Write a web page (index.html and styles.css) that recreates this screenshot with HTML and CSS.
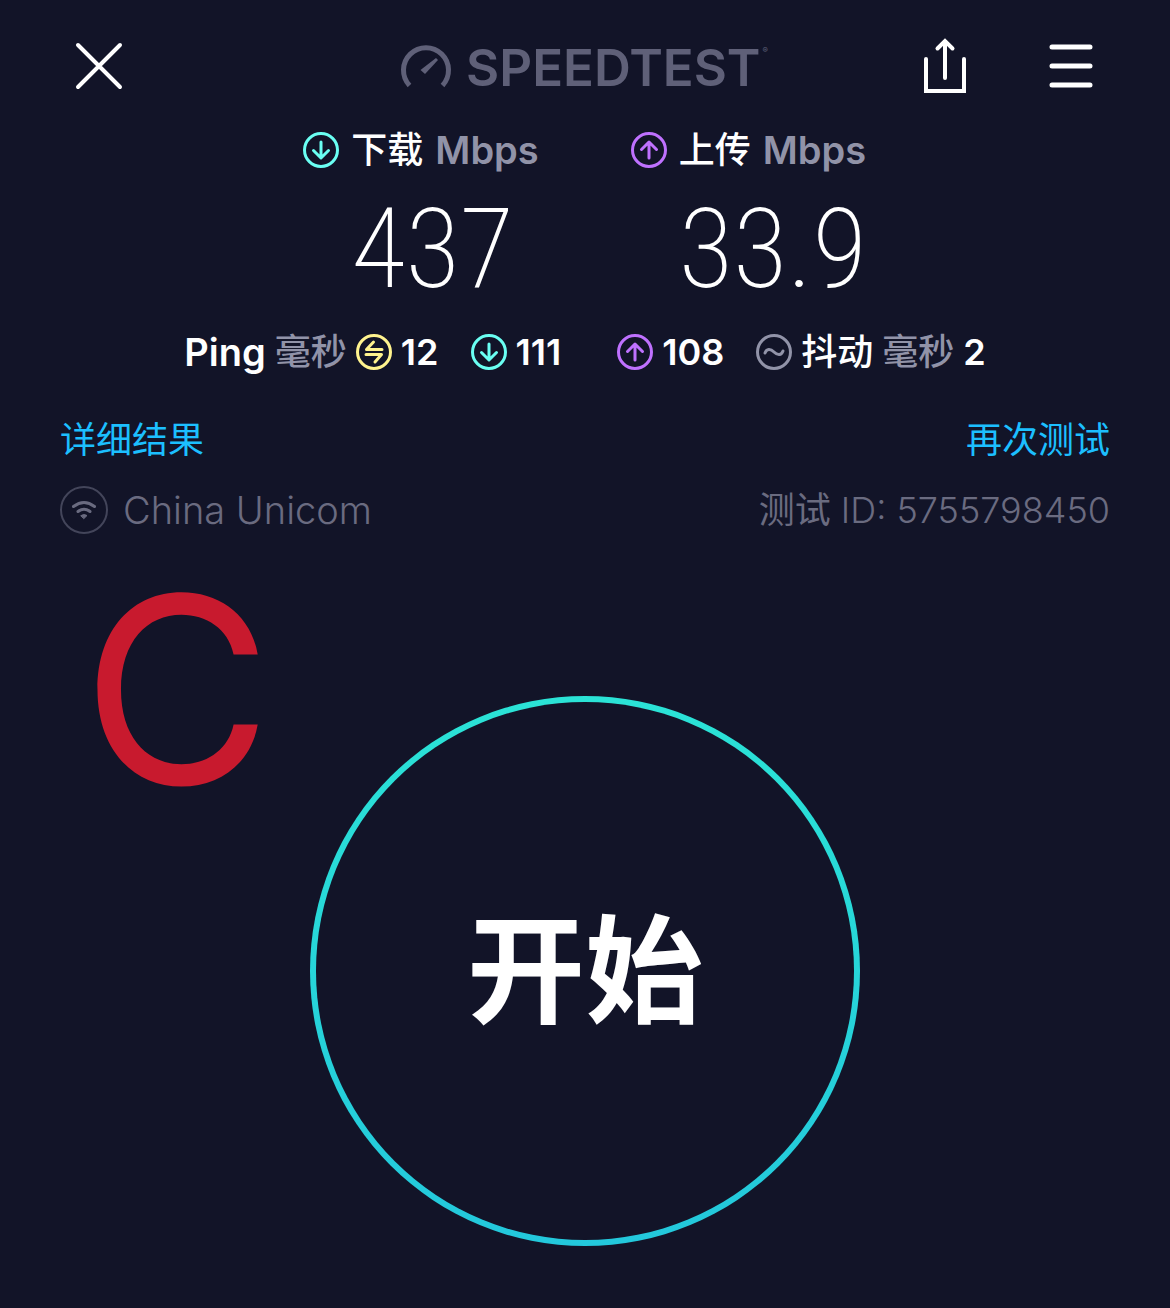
FILE: index.html
```
<!DOCTYPE html>
<html lang="zh-CN">
<head>
<meta charset="utf-8">
<title>Speedtest</title>
<meta name="viewport" content="width=device-width, initial-scale=1">
<link rel="stylesheet" href="styles.css">
</head>
<body>

<!-- shared icons -->
<svg class="sprite" aria-hidden="true">
  <symbol id="icon-down" viewBox="0 0 36 36">
    <circle cx="18" cy="18" r="16.5"/>
    <path d="M18 10v15.5M10.5 18.5l7.5 7.5l7.5-7.5"/>
  </symbol>
  <symbol id="icon-up" viewBox="0 0 36 36">
    <circle cx="18" cy="18" r="16.5"/>
    <path d="M18 26V10.5M10.5 17.5l7.5-7.5l7.5 7.5"/>
  </symbol>
  <symbol id="icon-ping" viewBox="0 0 36 36">
    <circle cx="18" cy="18" r="16.5"/>
    <path d="M26 15.5H10.5L17.5 8M10 20.5H25.5L19 28"/>
  </symbol>
  <symbol id="icon-jitter" viewBox="0 0 36 36">
    <circle cx="18" cy="18" r="16.5"/>
    <path d="M9 19c1.5-4.5 5.5-4.5 9-1s7.5 3.5 9-1"/>
  </symbol>
</svg>

<header class="topbar">
  <button class="icon-button" aria-label="关闭">
    <svg width="48" height="48" viewBox="0 0 48 48"><path d="M3 3l42 42M45 3L3 45"/></svg>
  </button>

  <div class="logo">
    <svg width="52" height="44" viewBox="0 0 52 44" aria-hidden="true">
      <path class="gauge" d="M9.500 41.500A22.500 22.500 0 1 1 42.500 41.500"/>
      <path class="needle" d="M36 14L38 16L25 30L20.500 26z"/>
    </svg>
    <span class="logo-name">SPEEDTEST</span><sup>®</sup>
  </div>

  <div class="actions">
    <button class="icon-button" aria-label="分享">
      <svg width="44" height="56" viewBox="0 0 44 56"><path d="M3 21v32h38V21M22 40V4M14.500 10.500L22 3l7.500 7.500"/></svg>
    </button>
    <button class="icon-button" aria-label="菜单">
      <svg class="bars" width="44" height="48" viewBox="0 0 44 48"><path d="M3 5h38M3 24h38M3 43h38"/></svg>
    </button>
  </div>
</header>

<main>
  <section class="speeds">
    <div class="speed">
      <h2><svg class="icon download"><use href="#icon-down"/></svg><span class="zh">下载</span> <span class="unit wide">Mbps</span></h2>
      <p class="value">437</p>
    </div>
    <div class="speed">
      <h2><svg class="icon upload"><use href="#icon-up"/></svg><span class="zh">上传</span> <span class="unit wide">Mbps</span></h2>
      <p class="value">33.9</p>
    </div>
  </section>

  <section class="latency">
    <div class="pair">
      <div class="metric"><span class="wide">Ping</span> <span class="unit zh">毫秒</span><svg class="icon ping"><use href="#icon-ping"/></svg>12</div>
      <div class="metric"><svg class="icon download"><use href="#icon-down"/></svg>111</div>
    </div>
    <div class="pair">
      <div class="metric"><svg class="icon upload"><use href="#icon-up"/></svg>108</div>
      <div class="metric"><svg class="icon jitter"><use href="#icon-jitter"/></svg><span class="zh">抖动</span> <span class="unit zh">毫秒</span> <span>2</span></div>
    </div>
  </section>

  <nav class="row links">
    <a href="#details">详细结果</a>
    <a href="#again">再次测试</a>
  </nav>

  <div class="row info">
    <span class="network">
      <svg width="48" height="48" viewBox="0 0 48 48" aria-hidden="true">
        <circle cx="24" cy="24" r="23"/>
        <path d="M13.500 20.500Q24 12.500 34.500 20.500M18 25.500Q24 21 30 25.500"/>
        <path class="dot" d="M21 29.500Q24 27.500 27 29.500L24 32.500z"/>
      </svg>
      <span class="wide">China Unicom</span>
    </span>
    <span><span class="label">测试</span> ID: 5755798450</span>
  </div>

  <section class="start">
    <span class="mark">C</span>
    <button class="start-button">开始</button>
  </section>
</main>

</body>
</html>
```
FILE: styles.css
```
* {
  box-sizing: border-box;
}

body {
  margin: 0;
  background: #121428;
  color: #fff;
  font-family: Inter, "Noto Sans CJK SC", sans-serif;
  font-size: 36px;
  line-height: 48px;
}

h2,
p {
  margin: 0;
  font-size: inherit;
}

button {
  padding: 0;
  border: 0;
  background: none;
  color: inherit;
  font: inherit;
  cursor: pointer;
}

svg {
  flex: none;
  fill: none;
  stroke: currentColor;
  stroke-linecap: round;
}

.sprite {
  position: absolute;
  width: 0;
  height: 0;
}

.zh {
  font-weight: 500;
}

.wide {
  font-size: 38px;
}

/* top bar */
.topbar {
  display: grid;
  grid-template-columns: 1fr auto 1fr;
  align-items: center;
  padding: 38px 77px 32px 75px;
}

.icon-button {
  display: flex;
  justify-self: start;
}

.icon-button svg {
  stroke-width: 4;
}

.icon-button .bars {
  stroke-width: 5;
}

.actions {
  display: flex;
  align-items: center;
  justify-content: flex-end;
  gap: 82px;
}

.logo {
  display: flex;
  align-items: center;
  gap: 14px;
  color: #5f6078;
}

.logo svg {
  stroke-width: 5;
  stroke-linecap: butt;
}

.logo .needle {
  fill: currentColor;
  stroke: none;
}

.logo-name {
  padding-top: 4px;
  font-size: 51px;
  font-weight: 600;
}

.logo sup {
  align-self: flex-start;
  margin-left: -12px;
  font-size: 8px;
  line-height: 20px;
}

/* results */
.icon {
  width: 36px;
  height: 36px;
  stroke-width: 3;
  stroke-linejoin: round;
}

.download { color: #6afff3; }
.upload { color: #bf71ff; }
.ping { color: #fff38e; }
.jitter,
.unit { color: #9193a8; }

.speeds {
  display: flex;
  justify-content: center;
  gap: 92px;
}

.speed h2 {
  display: flex;
  align-items: center;
  gap: 12px;
  font-weight: 600;
}

.value {
  margin-bottom: 4px;
  padding-left: 48px;
  font-family: "Roboto Condensed", Roboto, sans-serif;
  font-size: 112px;
  font-weight: 200;
  line-height: 150px;
}

.latency {
  display: flex;
  justify-content: center;
  gap: 56px;
  font-weight: 600;
}

.pair {
  display: flex;
  gap: 32px;
}

.metric {
  display: flex;
  align-items: center;
  gap: 9px;
}

/* links and connection */
.row {
  display: flex;
  justify-content: space-between;
  padding: 0 60px;
}

.links {
  margin-top: 40px;
}

.links a {
  color: #1cbfff;
  text-decoration: none;
}

.info {
  margin-top: 22px;
  color: #6a6b80;
  font-weight: 300;
}

.info .label {
  font-weight: 400;
}

.network {
  display: flex;
  gap: 15px;
}

.network svg {
  stroke-width: 3;
}

.network circle {
  stroke: #43455a;
  stroke-width: 2;
}

.network .dot {
  fill: currentColor;
  stroke-width: 1;
}

/* start */
.start {
  position: relative;
  display: flex;
  justify-content: center;
  padding: 162px 0 62px;
}

.mark {
  position: absolute;
  top: 26px;
  left: 82px;
  color: #c81a2e;
  font-size: 260px;
  line-height: 260px;
}

.start-button {
  width: 550px;
  height: 550px;
  border: 6px solid transparent;
  border-radius: 50%;
  background:
    linear-gradient(#121428, #121428) padding-box,
    linear-gradient(#2be3d6, #23c8dc) border-box;
  font-size: 118px;
  font-weight: 700;
}
```
